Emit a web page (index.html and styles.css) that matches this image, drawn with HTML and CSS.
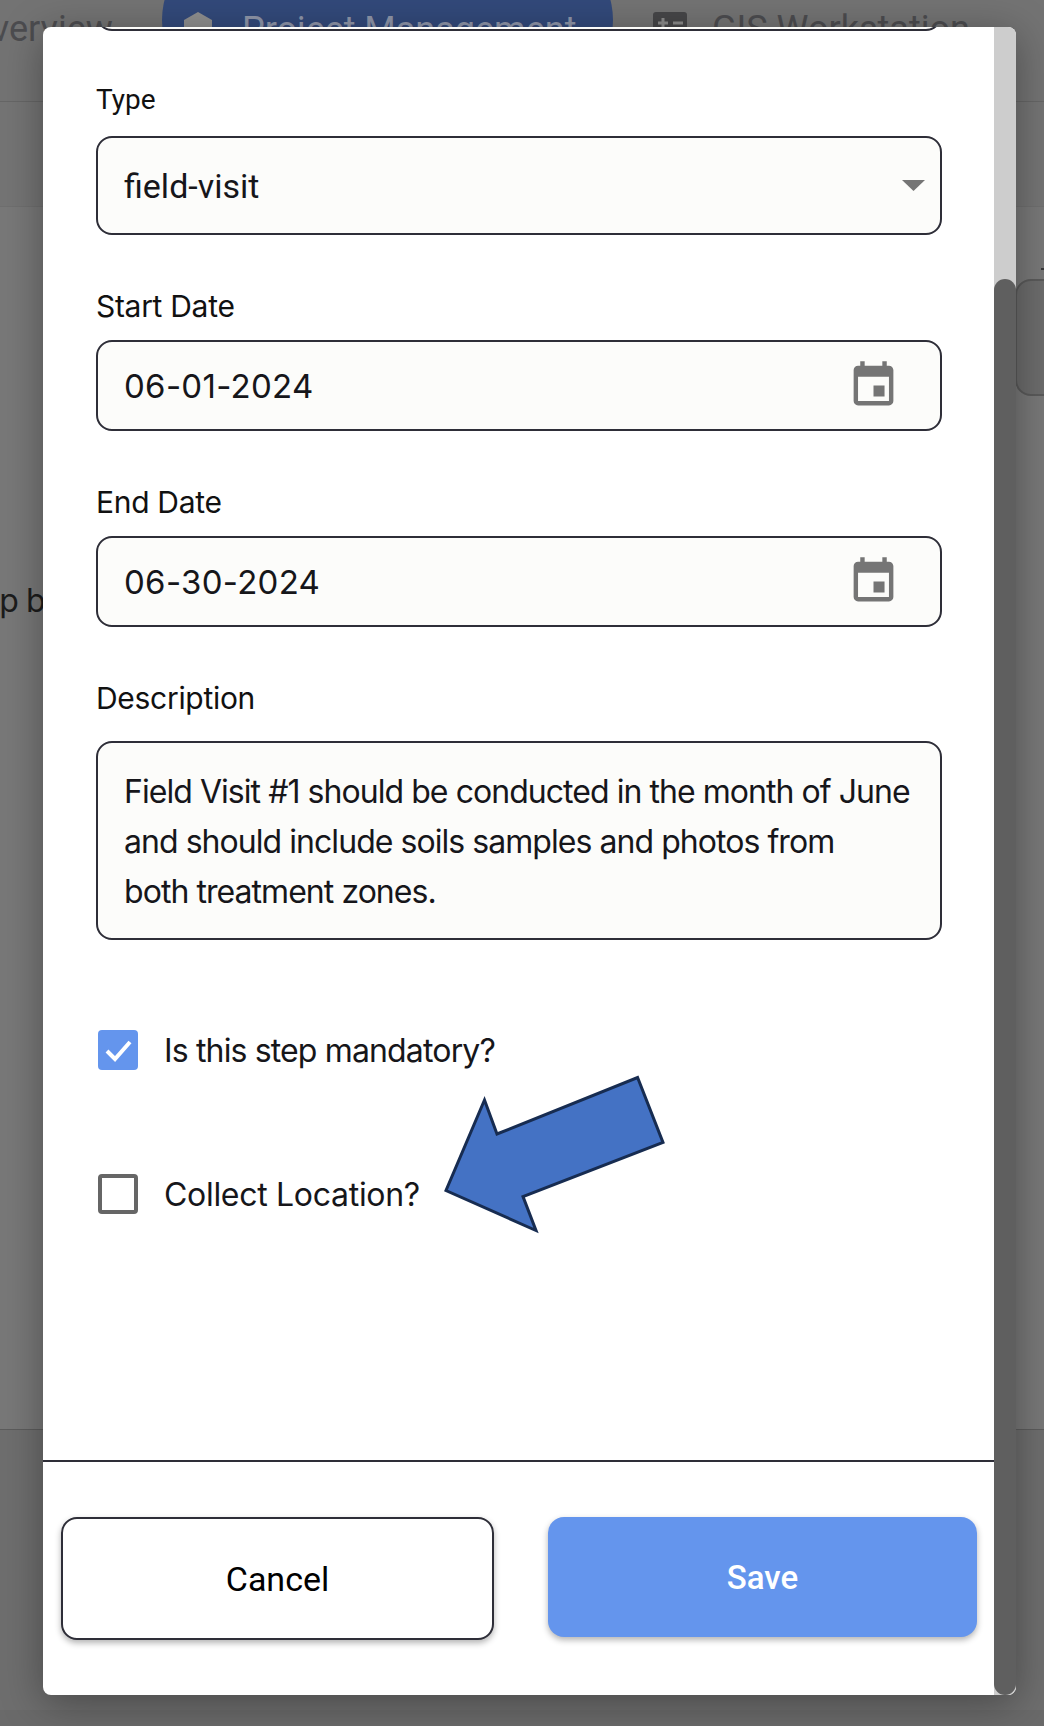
FILE: index.html
```html
<!DOCTYPE html>
<html lang="en">
<head>
<meta charset="utf-8">
<title>Edit step</title>
<link rel="stylesheet" href="styles.css">
</head>
<body>
<div class="page">
  <nav class="nav">
    <span class="nav-link nav-first">Overview</span>
    <span class="nav-pill">
      <svg class="nav-hex" viewBox="0 0 28 32"><path d="M14 0l14 8v16l-14 8-14-8V8z"/></svg>
      <span class="nav-link nav-pill-text">Project Management</span>
    </span>
    <span class="nav-gis">
      <svg class="nav-calc" viewBox="0 0 34 34"><rect width="34" height="34" rx="3"/><path d="M5 11h10M10 6v10M20 11h10" stroke="#8a8a8a" stroke-width="3"/></svg>
      <span class="nav-link">GIS Workstation</span>
    </span>
  </nav>
  <div class="subbar"></div>
  <main class="main">
    <p class="step-text">Step by step</p>
    <div class="side-card"></div>
  </main>
  <div class="foot"></div>
</div>

<div class="modal">
  <div class="pane">
    <div class="scroll">
      <div class="field-prev"></div>
      <div class="field field-type">
        <div class="label label-roboto">Type</div>
        <div class="control control-select">
          <span class="value-roboto">field-visit</span>
          <svg class="caret" viewBox="0 0 23 11"><path d="M0 0h23L11.500 11z"/></svg>
        </div>
      </div>
      <div class="field">
        <div class="label">Start Date</div>
        <div class="control">
          <span>06-01-2024</span>
          <svg class="cal" viewBox="0 0 24 24"><path d="M17 12h-5v5h5v-5zM16 1v2H8V1H6v2H5c-1.110 0-1.990.9-1.990 2L3 19c0 1.100.89 2 2 2h14c1.100 0 2-.9 2-2V5c0-1.100-.9-2-2-2h-1V1h-2zm3 18H5V8h14v11z"/></svg>
        </div>
      </div>
      <div class="field">
        <div class="label">End Date</div>
        <div class="control">
          <span>06-30-2024</span>
          <svg class="cal" viewBox="0 0 24 24"><path d="M17 12h-5v5h5v-5zM16 1v2H8V1H6v2H5c-1.110 0-1.990.9-1.990 2L3 19c0 1.100.89 2 2 2h14c1.100 0 2-.9 2-2V5c0-1.100-.9-2-2-2h-1V1h-2zm3 18H5V8h14v11z"/></svg>
        </div>
      </div>
      <div class="field field-desc">
        <div class="label">Description</div>
        <div class="textarea">Field Visit #1 should be conducted in the month of June<br>and should include soils samples and photos from<br>both treatment zones.</div>
      </div>
      <div class="check check-first">
        <span class="box box-on">
          <svg viewBox="0 0 40 40"><path d="M9 21l8 8 15-17" fill="none" stroke="#fff" stroke-width="4"/></svg>
        </span>
        <span>Is this step mandatory?</span>
      </div>
      <div class="check check-second">
        <span class="box"></span>
        <span>Collect Location?</span>
      </div>
    </div>
    <div class="footer">
      <button class="btn btn-cancel">Cancel</button>
      <button class="btn btn-save">Save</button>
    </div>
  </div>
  <div class="track"><div class="thumb"></div></div>
</div>

<svg class="arrow" viewBox="0 0 240 170">
  <path d="M193.600 3.500L219 68.500 79 122.500 92 156.500 2 116.500 40.500 26 53 60z"/>
</svg>
</body>
</html>
```

FILE: styles.css
```css
* { box-sizing: border-box; }

html, body {
  margin: 0;
  height: 1726px;
  overflow: hidden;
}

body {
  position: relative;
  font-family: "Inter", "Liberation Sans", sans-serif;
  color: #16161a;
}

.page {
  height: 1726px;
  display: flex;
  flex-direction: column;
  background: #767676;
  overflow: hidden;
}

.nav {
  height: 102px;
  flex: none;
  display: flex;
  align-items: flex-start;
  border-bottom: 1px solid #666;
  background: #737373;
}

.nav-link {
  font-family: "Roboto", "Liberation Sans", sans-serif;
  font-size: 36px;
  line-height: 40px;
  margin-top: 9px;
  color: #4c4c4f;
  white-space: nowrap;
}

.nav-first {
  width: 140px;
  margin-left: -33px;
}

.nav-pill {
  margin-left: 55px;
  margin-top: -60px;
  width: 451px;
  height: 160px;
  flex: none;
  padding: 72px 0 0 22px;
  display: flex;
  align-items: flex-start;
  gap: 30px;
  background: #32497a;
  border-radius: 80px;
}

.nav-hex {
  width: 28px;
  height: 32px;
  fill: #8e8e8e;
  flex: none;
}

.nav-pill-text {
  margin-top: -2px;
  color: #8e95a8;
}

.nav-gis {
  margin-left: 40px;
  margin-top: 12px;
  display: flex;
  gap: 25px;
}

.nav-calc {
  width: 34px;
  height: 34px;
  fill: #464648;
  flex: none;
}

.nav-gis .nav-link { margin-top: -3px; }

.subbar {
  height: 105px;
  flex: none;
  border-bottom: 1px solid #6f6f6f;
  background: #747474;
}

.main {
  height: 1223px;
  flex: none;
  display: flex;
  align-items: flex-start;
  justify-content: space-between;
  border-bottom: 1px solid #5c5c5c;
  background: #787878;
}

.step-text {
  margin: 374px 0 0 -47px;
  font-size: 32px;
  line-height: 40px;
  color: #1c1c1c;
  letter-spacing: -1px;
  white-space: nowrap;
}

.side-card {
  position: relative;
  width: 200px;
  height: 117px;
  margin-top: 72px;
  margin-right: -171px;
  flex: none;
  background: #6c6c6c;
  border: 2px solid #5a5a5a;
  border-radius: 16px;
}

.side-card::before {
  content: "";
  position: absolute;
  left: 24px;
  top: -13px;
  width: 6px;
  height: 2px;
  background: #38383a;
}

.side-card::after {
  content: "";
  position: absolute;
  left: 27px;
  top: 50px;
  width: 3px;
  height: 3px;
  background: #4a443c;
  box-shadow: 0 16px 0 #4a443c;
}

.foot {
  flex: 1;
  background: #6e6e6e;
  border-bottom: 16px solid #6a6a6a;
}

.modal {
  position: absolute;
  left: 43px;
  top: 27px;
  width: 973px;
  height: 1668px;
  display: flex;
  background: #fff;
  border-radius: 8px;
  overflow: hidden;
  box-shadow: 0 8px 40px rgba(0, 0, 0, .35);
}

.pane {
  flex: 1;
  min-width: 0;
  display: flex;
  flex-direction: column;
}

.scroll {
  flex: 1;
  min-height: 0;
  padding: 0 52px 0 53px;
  overflow: hidden;
}

.field-prev {
  height: 90px;
  margin-top: -86px;
  background: #fcfcfa;
  border: 2px solid #2e2e38;
  border-radius: 16px;
}

.field { margin-top: 51px; }

.field-type { margin-top: 49px; }

.label {
  height: 40px;
  margin-bottom: 14px;
  font-size: 30px;
  line-height: 40px;
  letter-spacing: -0.3px;
  color: #111;
}

.field-type .label {
  margin-bottom: 16px;
  font-size: 28px;
}

.label-roboto {
  font-family: "Roboto", "Liberation Sans", sans-serif;
  letter-spacing: 0;
}

.control {
  height: 91px;
  padding: 0 40px 0 26px;
  display: flex;
  align-items: center;
  justify-content: space-between;
  background: #fcfcfa;
  border: 2px solid #2e2e38;
  border-radius: 16px;
  font-size: 33px;
  letter-spacing: 0.3px;
}

.control-select {
  height: 99px;
  padding-right: 15px;
}

.value-roboto {
  font-family: "Roboto", "Liberation Sans", sans-serif;
  font-size: 34px;
  letter-spacing: 0;
}

.caret {
  width: 23px;
  height: 11px;
  fill: #757575;
}

.cal {
  width: 53px;
  height: 53px;
  fill: #757575;
  flex: none;
}

.field-desc .label { margin-bottom: 23px; }

.textarea {
  height: 199px;
  padding: 24px 10px 0 26px;
  background: #fcfcfa;
  border: 2px solid #2e2e38;
  border-radius: 16px;
  font-size: 32px;
  line-height: 50px;
  letter-spacing: -0.95px;
}

.check {
  height: 40px;
  display: flex;
  align-items: center;
  gap: 26px;
  margin-left: 2px;
  font-size: 32px;
  letter-spacing: -0.85px;
}

.check-first { margin-top: 90px; }

.check-second {
  margin-top: 104px;
  letter-spacing: -0.3px;
}

.box {
  width: 40px;
  height: 40px;
  flex: none;
  border: 4px solid #666;
  border-radius: 4px;
  background: #fff;
}

.box-on {
  border: 0;
  background: #6495ed;
}

.box-on svg {
  display: block;
  width: 40px;
  height: 40px;
}

.footer {
  height: 235px;
  flex: none;
  padding: 55px 17px 0 18px;
  display: flex;
  align-items: flex-start;
  gap: 54px;
  border-top: 2px solid #2e2e38;
}

.btn {
  flex: 1;
  border-radius: 16px;
  font-family: "Roboto", "Liberation Sans", sans-serif;
  font-size: 34px;
  box-shadow: 0 3px 6px rgba(0, 0, 0, .3);
}

.btn-cancel {
  height: 123px;
  padding: 0;
  background: #fff;
  color: #000;
  font-weight: 400;
  border: 2px solid #2e2e38;
}

.btn-save {
  height: 120px;
  padding: 0;
  background: #6495ed;
  color: #fff;
  font-size: 33px;
  font-weight: 500;
  border: 0;
}

.track {
  width: 22px;
  flex: none;
  background: #cdcdcd;
  padding-top: 252px;
  display: flex;
}

.thumb {
  flex: 1;
  background: #5f5f5f;
  border-radius: 11px;
}

.arrow {
  position: absolute;
  left: 444px;
  top: 1074px;
  width: 240px;
  height: 170px;
  overflow: visible;
}

.arrow path {
  fill: #4472c4;
  stroke: #172c51;
  stroke-width: 3;
}
```
